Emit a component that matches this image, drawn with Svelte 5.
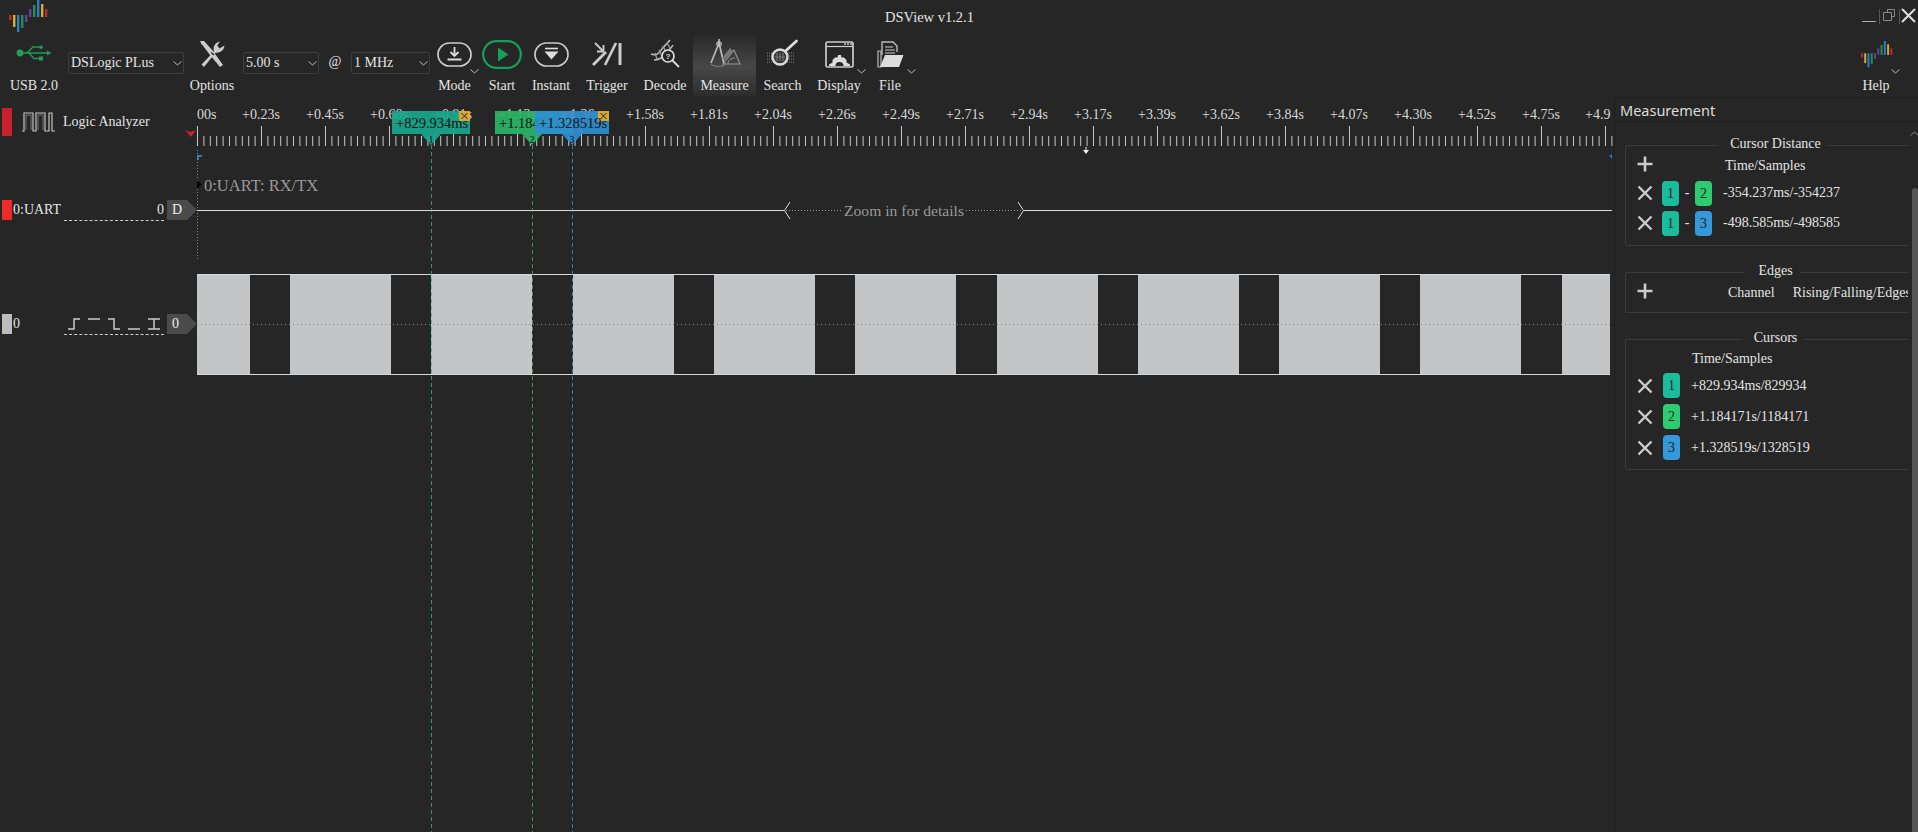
<script>
	const bars = [
		[9, 15, 5, "#b5302c"], [13, 15, 12, "#d8a83a"], [17, 15, 17, "#2a7fc0"], [21, 15, 13, "#23924f"], [25, 15, 7, "#6d3d9c"],
		[29, 9, 8, "#6d3d9c"], [33, 5, 12, "#23924f"], [37, 0, 17, "#2a7fc0"], [41, 4, 13, "#d8a83a"], [45, 9, 8, "#b5302c"]
	];

	const rulerLabels = ["+0.23s", "+0.45s", "+0.68s", "+0.91s", "+1.13s", "+1.36s", "+1.58s", "+1.81s", "+2.04s", "+2.26s", "+2.49s", "+2.71s", "+2.94s", "+3.17s", "+3.39s", "+3.62s", "+3.84s", "+4.07s", "+4.30s", "+4.52s", "+4.75s"];

	const ticks = [];
	for (let i = 0; i <= 221; i++) {
		const x = 197.5 + i * 6.4;
		if (x > 1612) break;
		ticks.push({ x, major: i % 10 === 0 });
	}

	const blocks = [[197, 53]];
	for (let i = 0; i < 10; i++) {
		const x = Math.round(290 + i * 141.3);
		blocks.push([x, Math.min(101, 1610 - x)]);
	}

	const flags = [
		{ n: 1, x: 431, left: 392, w: 78, color: "#1aa88e", line: "#2fb9a0", text: "+829.934ms" },
		{ n: 2, x: 532, left: 495, w: 78, color: "#2bb566", line: "#35c476", text: "+1.184171s" },
		{ n: 3, x: 572, left: 535, w: 74, color: "#2f8fd0", line: "#3a9be0", text: "+1.328519s" }
	];

	const distances = [
		{ a: 1, b: 2, text: "-354.237ms/-354237" },
		{ a: 1, b: 3, text: "-498.585ms/-498585" }
	];

	const cursors = [
		{ n: 1, text: "+829.934ms/829934" },
		{ n: 2, text: "+1.184171s/1184171" },
		{ n: 3, text: "+1.328519s/1328519" }
	];
</script>

{#snippet logo(w, h)}
	<svg width={w} height={h} viewBox="8 0 40 33">
		{#each bars as b}
			<rect x={b[0]} y={b[1]} width="2.4" height={b[2]} fill={b[3]} />
		{/each}
	</svg>
{/snippet}

{#snippet chevron()}
	<svg class="chev" width="9" height="5" viewBox="0 0 9 5"><path d="M.5.5 4.5 4 8.5.5" fill="none" stroke="#bbb" /></svg>
{/snippet}

{#snippet closeIcon()}
	<svg class="x" width="16" height="16" viewBox="0 0 16 16"><path d="M1.5 1.5 14.5 14.5M14.5 1.5 1.5 14.5" stroke="#ccc" stroke-width="2.4" /></svg>
{/snippet}

{#snippet plusIcon()}
	<svg class="x plus" width="16" height="16" viewBox="0 0 16 16"><path d="M8 .5V15.5M.5 8H15.5" stroke="#ccc" stroke-width="2.6" /></svg>
{/snippet}

<div class="app">
	<header class="titlebar">
		<div class="title-logo">{@render logo(40, 33)}</div>
		<span class="title">DSView v1.2.1</span>
		<div class="winctl">
			<svg width="56" height="24" viewBox="0 0 56 24">
				<path d="M1 13.5H15" stroke="#aaa" />
				<path d="M18.5 1V16M38.5 1V16" stroke="#555" />
				<path d="M26.5 1.5H33.5V8.5H30.5V4.5H26.5ZM22.5 4.5H30.5V12.5H22.5Z" fill="none" stroke="#888" />
				<path d="M41 1 54 14M54 1 41 14" stroke="#ddd" stroke-width="2" />
			</svg>
		</div>
	</header>

	<nav class="toolbar">
		<div class="tool usb">
			<div class="icon">
				<svg width="36" height="16" viewBox="0 0 36 16">
					<circle cx="4" cy="8" r="3.4" fill="#1f9d55" />
					<path d="M4 8H32M11 8 17 2H24M13 8 18 13.5H24" fill="none" stroke="#1f9d55" stroke-width="1.3" />
					<circle cx="25" cy="2.3" r="1.8" fill="#1f9d55" />
					<rect x="23" y="11.5" width="4" height="4" fill="#1f9d55" />
					<path d="M31 5.5 35.5 8 31 10.5Z" fill="#1f9d55" />
				</svg>
			</div>
			<span>USB 2.0</span>
		</div>
		<div class="select device">DSLogic PLus {@render chevron()}</div>
		<div class="tool options">
			<div class="icon">
				<svg width="27" height="28" viewBox="0 0 27 28">
					<path d="M2 3 5 1 14 11 24 25 21 27 11 15Z" fill="#ccc" />
					<path d="M1 1 5 1 6 4 3 5Z" fill="#ccc" />
					<path d="M2.5 24.5 15 11.5C14 7 15 3 21 1.5L18.2 5.5 20.5 8.5 25.5 5.5C25 10.5 21 13 16.5 12.8L5 27Z" fill="#ccc" />
					<path d="M12.3 12.5 15 15" stroke="#262626" stroke-width="1.4" />
				</svg>
			</div>
			<span>Options</span>
		</div>
		<div class="select time">5.00 s {@render chevron()}</div>
		<span class="at">@</span>
		<div class="select rate">1 MHz {@render chevron()}</div>

		<div class="tool mode">
			<div class="icon">
				<svg width="35" height="25" viewBox="0 0 35 25">
					<rect x="1" y="1" width="33" height="23" rx="11.5" fill="none" stroke="#ccc" stroke-width="1.7" />
					<path d="M17.5 5V13M13.5 10 17.5 14 21.5 10" fill="none" stroke="#ddd" stroke-width="1.8" />
					<path d="M10.5 17.5H24.5" stroke="#ddd" stroke-width="2" />
				</svg>
			</div>
			<span>Mode</span>
			{@render chevron()}
		</div>
		<div class="tool start">
			<div class="icon">
				<svg width="40" height="29" viewBox="0 0 40 29">
					<rect x="1.2" y="1.2" width="37.6" height="26.6" rx="13.3" fill="none" stroke="#16a057" stroke-width="2.2" />
					<path d="M16 7.5 26.5 14.5 16 21.5Z" fill="#16a057" />
				</svg>
			</div>
			<span>Start</span>
		</div>
		<div class="tool instant">
			<div class="icon">
				<svg width="35" height="25" viewBox="0 0 35 25">
					<rect x="1" y="1" width="33" height="23" rx="11.5" fill="none" stroke="#ccc" stroke-width="1.7" />
					<path d="M11 6.5H24" stroke="#ddd" stroke-width="1.6" />
					<path d="M10.5 9.5H24.5L17.5 17.5Z" fill="#ddd" />
				</svg>
			</div>
			<span>Instant</span>
		</div>
		<div class="tool trigger">
			<div class="icon">
				<svg width="30" height="24" viewBox="0 0 30 24">
					<path d="M1 23 14 10" stroke="#ccc" stroke-width="2.8" />
					<path d="M13 23 24 1" stroke="#ccc" stroke-width="2.6" />
					<path d="M28 1V23" stroke="#ccc" stroke-width="3" />
					<path d="M3 1 11 9M11.5 3V9.5H5" fill="none" stroke="#ccc" stroke-width="1.8" />
				</svg>
			</div>
			<span>Trigger</span>
		</div>
		<div class="tool decode">
			<div class="icon">
				<svg width="30" height="30" viewBox="0 0 30 30">
					<path d="M1 15C7 17 9 14 12 10 14 7 17 5 20 1M4 21C9 21 12 19 15 15 17 12 21 10 23 6" fill="none" stroke="#bbb" stroke-width="1.6" />
					<path d="M5 14 7 20M9 11 12 17M13 7 16 13M17 4 20 9" stroke="#999" stroke-width="1.4" />
					<circle cx="18" cy="17" r="6" fill="#262626" stroke="#ddd" stroke-width="1.7" />
					<path d="M22.5 21.5 29 28" stroke="#ddd" stroke-width="1.8" />
					<text x="18" y="20" class="qmark">?</text>
				</svg>
			</div>
			<span>Decode</span>
		</div>
		<div class="tool measure active">
			<div class="icon">
				<svg width="32" height="30" viewBox="0 0 32 30">
					<path d="M10 1V5M10 5 2 25M10 5 15 26" fill="none" stroke="#bbb" stroke-width="1.7" />
					<circle cx="10" cy="6" r="2.2" fill="none" stroke="#bbb" stroke-width="1.2" />
					<path d="M14 26 25 12 31 26Z" fill="none" stroke="#999" stroke-width="1.1" />
					<path d="M19 26C19 22 22 20 26 20" fill="none" stroke="#999" />
					<path d="M21 10 24 13 16 22 13 20Z" fill="#777" />
					<path d="M2 26C5 29 12 29 16 27" fill="none" stroke="#888" />
				</svg>
			</div>
			<span>Measure</span>
		</div>
		<div class="tool search">
			<div class="icon">
				<svg width="32" height="30" viewBox="0 0 32 30">
					<path d="M0 14H28M0 17H28M0 20H28M0 23H28" stroke="#666" stroke-width="1.6" stroke-dasharray="1 1" />
					<circle cx="13" cy="18" r="7.5" fill="#3a3a3a" stroke="#ddd" stroke-width="2.4" />
					<path d="M10 14V22M13 14V22M16 14V22M8 18H18" stroke="#777" />
					<path d="M18.5 12 29.5 2" stroke="#ddd" stroke-width="2.8" stroke-linecap="round" />
				</svg>
			</div>
			<span>Search</span>
		</div>
		<div class="tool display">
			<div class="icon">
				<svg width="29" height="27" viewBox="0 0 29 27">
					<rect x="1" y="1" width="27" height="25" rx="1.5" fill="none" stroke="#ccc" stroke-width="1.7" />
					<path d="M1 5.5H28" stroke="#ccc" stroke-width="1.2" />
					<path d="M19 3H21M22 3H24M25 3H27" stroke="#ccc" stroke-width="1.5" />
					<path d="M4 25V23.5L7.5 21.5 7.5 19 10 16.5 12.5 16.5 13 14H16L16.5 16.5H19L21.5 19V21.5L25 23.5V25H18.5A4 4 0 0 0 10.5 25Z" fill="#ddd" />
				</svg>
			</div>
			<span>Display</span>
			{@render chevron()}
		</div>
		<div class="tool file">
			<div class="icon">
				<svg width="27" height="27" viewBox="0 0 27 27">
					<path d="M5 14V1H16L20 5V11" fill="none" stroke="#bbb" stroke-width="1.4" />
					<path d="M8 6H16M8 9H18M8 12H18" stroke="#ccc" stroke-width="1.2" />
					<path d="M1 10H4V26H1Z" fill="none" stroke="#bbb" stroke-width="1.2" />
					<path d="M8 14H26.5L22 26H3Z" fill="#ddd" />
				</svg>
			</div>
			<span>File</span>
			{@render chevron()}
		</div>
		<div class="tool help">
			<div class="icon">{@render logo(33, 27)}</div>
			<span>Help</span>
			{@render chevron()}
		</div>
	</nav>

	<main class="body">
		<section class="labels">
			<svg class="ruler-mark" width="11" height="7" viewBox="0 0 11 7"><path d="M0 0 5 2 11 0 6 7Z" fill="#cc2030" /></svg>
			<div class="la-row">
				<i class="swatch la"></i>
				<svg width="33" height="20" viewBox="0 0 33 20">
					<path d="M0 19H2V1H11V19H14V1H23V19H27V1H30V19H33" fill="none" stroke="#c4c4c4" stroke-width="1.2" />
					<path d="M4 18V3H9V18M16 18V3H21V18" fill="none" stroke="#777" />
				</svg>
				<span>Logic Analyzer</span>
			</div>
			<div class="ch-row uart">
				<i class="swatch red"></i>
				<span class="ch-name">0:UART</span>
				<span class="ch-num">0</span>
				<span class="tag">D</span>
			</div>
			<div class="ch-row dso">
				<i class="swatch gray"></i>
				<span class="ch-name">0</span>
				<svg class="trig" width="92" height="12" viewBox="0 0 92 12">
					<path d="M0 11H6V1H12M20 1H32M40 1H46V11H52M60 11H72M80 1H92M86 1V11M80 11H92" fill="none" stroke="#ccc" stroke-width="1.5" />
				</svg>
				<span class="tag">0</span>
			</div>
		</section>

		<svg class="view" width="1417" height="734" viewBox="197 98 1417 734">
			<text x="197" y="119" class="tick-label" text-anchor="start">00s</text>
			{#each rulerLabels as label, i}
				<text x={261 + i * 64} y="119" class="tick-label" text-anchor="middle">{label}</text>
			{/each}
			<text x="1585" y="119" class="tick-label">+4.9</text>
			{#each ticks as t}
				<line x1={t.x} x2={t.x} y1={t.major ? 126 : 136} y2="146" stroke="#c8c8c8" />
			{/each}
			<path d="M1083 150H1089L1086 154Z M1085.5 147H1086.5V151H1085.5Z" fill="#eee" />
			<path d="M197 160V155H203L201 157H199V160Z" fill="#2a7fc0" />
			<path d="M1609 155H1612V159Z" fill="#2a7fc0" />

			<path d="M197.5 150V260" stroke="#888" stroke-dasharray="1 2" />
			<path d="M197 180 201.5 184.5 197 189Z" fill="#000" />
			<text x="204" y="191" class="decoder">0:UART: RX/TX</text>
			<path d="M197 210.5H784M1024 210.5H1612" stroke="#ddd" />
			<path d="M790 202 784.5 210.5 790 219M1018 202 1023.5 210.5 1018 219" fill="none" stroke="#ddd" />
			<path d="M786 210.5H842M966 210.5H1022" stroke="#999" stroke-dasharray="1 2" />
			<text x="904" y="216" class="zoom-hint" text-anchor="middle">Zoom in for details</text>

			{#each blocks as b}
				<rect x={b[0]} y="274" width={b[1]} height="101" fill="#c4c5c7" />
			{/each}
			<path d="M197 274.5H1610M197 374.5H1610" stroke="#d8d8d8" />
			<path d="M197 324.5H1610" stroke="#888" stroke-dasharray="1 3" />

			{#each flags as f}
				<line x1={f.x + 0.5} x2={f.x + 0.5} y1="145" y2="832" stroke={f.line} stroke-dasharray="4 3" opacity="0.75" />
			{/each}
			{#each flags as f}
				<g opacity="0.92">
					<rect x={f.left} y="111" width={f.w} height="23" fill={f.color} />
					<path d="M{f.x - 10} 134H{f.x + 10}L{f.x} 145Z" fill={f.color} />
					<rect x={f.left + f.w - 11} y="111" width="11" height="10" fill="#e8b030" />
					<path d="M{f.left + f.w - 8.5} 113 {f.left + f.w - 2.5} 119M{f.left + f.w - 2.5} 113 {f.left + f.w - 8.5} 119" stroke="#222" />
					<text x={f.left + 4} y="128" class="flag-text">{f.text}</text>
					<text x={f.x} y="143" class="flag-num" text-anchor="middle">{f.n}</text>
				</g>
			{/each}
		</svg>

		<aside class="dock">
			<div class="dock-head">Measurement</div>
			<div class="dock-body">
				<div class="groups">
					<fieldset class="g1">
						<legend>Cursor Distance</legend>
						<div class="row head">
							{@render plusIcon()}
							<span class="time-head">Time/Samples</span>
						</div>
						{#each distances as d}
							<div class="row">
								{@render closeIcon()}
								<b class="badge c{d.a} first">{d.a}</b>
								<span class="dash">-</span>
								<b class="badge c{d.b}">{d.b}</b>
								<span class="val">{d.text}</span>
							</div>
						{/each}
					</fieldset>
					<fieldset class="g2">
						<legend>Edges</legend>
						<div class="row edge">
							{@render plusIcon()}
							<span class="channel">Channel</span>
							<span class="rising">Rising/Falling/Edges</span>
						</div>
					</fieldset>
					<fieldset class="g3">
						<legend>Cursors</legend>
						<div class="cursor-head">Time/Samples</div>
						{#each cursors as c}
							<div class="row cursor">
								{@render closeIcon()}
								<b class="badge c{c.n} first">{c.n}</b>
								<span class="val">{c.text}</span>
							</div>
						{/each}
					</fieldset>
				</div>
				<div class="scroll">
					<svg width="9" height="5" viewBox="0 0 9 5"><path d="M.5 4.5 4.5 1 8.5 4.5" fill="none" stroke="#888" /></svg>
					<div class="thumb"></div>
				</div>
			</div>
		</aside>
	</main>
</div>

<style>
	:global(body) {
		margin: 0;
		background: #262626;
	}
	.app {
		width: 1918px;
		height: 832px;
		background: #262626;
		color: #e4e4e4;
		font-family: "Liberation Serif", serif;
		font-size: 14px;
		display: flex;
		flex-direction: column;
		overflow: hidden;
	}

	.titlebar {
		height: 32px;
		flex: none;
		position: relative;
		display: flex;
		align-items: flex-start;
		justify-content: space-between;
	}
	.title-logo {
		margin-left: 8px;
		line-height: 0;
	}
	.title {
		position: absolute;
		left: 885px;
		top: 8px;
		font-size: 14.5px;
		line-height: 18px;
	}
	.winctl {
		margin-top: 8px;
		margin-right: 1px;
		line-height: 0;
	}

	.toolbar {
		height: 66px;
		flex: none;
		display: flex;
		align-items: flex-start;
	}
	.tool {
		position: relative;
		height: 64px;
		display: flex;
		flex-direction: column;
		align-items: center;
		flex: none;
	}
	.tool .icon {
		height: 44px;
		display: flex;
		align-items: center;
		justify-content: center;
	}
	.tool span {
		line-height: 20px;
		white-space: nowrap;
	}
	.tool .chev {
		position: absolute;
		top: 37px;
		right: -1px;
	}
	.usb { width: 68px; }
	.usb .icon { padding-bottom: 2px; box-sizing: border-box; }
	.options { width: 56px; }
	.mode { width: 49px; }
	.start { width: 46px; }
	.instant { width: 52px; }
	.trigger { width: 60px; }
	.decode { width: 56px; }
	.measure { width: 63px; }
	.search { width: 53px; }
	.display { width: 60px; }
	.file { width: 42px; margin-right: 8px; }
	.help { width: 40px; margin-left: auto; margin-right: 22px; }
	.mode .chev { right: 0; }
	.display .chev { right: 3px; }
	.file .chev { right: -5px; }
	.help .chev { right: -4px; }
	.measure.active {
		background: linear-gradient(#262626, #474747 55%, #2c2c2c);
	}
	.measure span {
		margin-top: 3px;
	}
	.qmark {
		font-size: 8px;
		font-weight: 700;
		fill: #ddd;
		text-anchor: middle;
		font-family: "Liberation Sans", sans-serif;
	}

	.select {
		position: relative;
		height: 22px;
		margin-top: 20px;
		box-sizing: border-box;
		border: 1px solid #3d3d3d;
		border-radius: 2px;
		padding-left: 2px;
		line-height: 20px;
		font-size: 14px;
		flex: none;
	}
	.select .chev {
		position: absolute;
		right: 1px;
		top: 8px;
	}
	.device { width: 116px; }
	.time { width: 76px; margin-left: 3px; }
	.rate { width: 79px; }
	.at {
		width: 32px;
		flex: none;
		text-align: center;
		margin-top: 22px;
	}

	.body {
		flex: 1;
		display: flex;
		min-height: 0;
	}
	.labels {
		position: relative;
		width: 197px;
		flex: none;
	}
	.ruler-mark {
		position: absolute;
		left: 185px;
		top: 32px;
	}
	.la-row {
		height: 29px;
		margin-top: 9px;
		display: flex;
		align-items: center;
	}
	.la-row svg {
		margin-left: 10px;
		margin-right: 8px;
	}
	.swatch {
		display: block;
		width: 10px;
		margin-left: 2px;
		flex: none;
	}
	.swatch.la {
		height: 28px;
		background: #c8202e;
	}
	.swatch.red {
		height: 20px;
		background: #ee2a2a;
	}
	.swatch.gray {
		height: 20px;
		background: #bcbcbc;
	}
	.ch-row {
		position: relative;
		height: 20px;
		display: flex;
		align-items: center;
	}
	.ch-row.uart { margin-top: 64px; }
	.ch-row.dso { margin-top: 94px; }
	.ch-row::after {
		content: "";
		position: absolute;
		left: 64px;
		width: 100px;
		top: 20px;
		border-top: 1px dashed #ccc;
	}
	.ch-name {
		margin-left: 1px;
		font-size: 14px;
	}
	.ch-num {
		position: absolute;
		left: 157px;
	}
	.trig {
		position: absolute;
		left: 68px;
		top: 4px;
	}
	.tag {
		position: absolute;
		left: 167px;
		width: 30px;
		height: 20px;
		box-sizing: border-box;
		padding-left: 5px;
		line-height: 20px;
		background: #4b4b4b;
		clip-path: polygon(0 0, 20px 0, 30px 50%, 20px 100%, 0 100%);
		color: #eee;
	}

	.view {
		display: block;
		flex: none;
		width: 1417px;
		height: 734px;
	}
	.tick-label {
		font-size: 14px;
		fill: #d8d8d8;
	}
	.decoder {
		font-size: 16.5px;
		fill: #9a9a9a;
	}
	.zoom-hint {
		font-size: 15.6px;
		fill: #9a9a9a;
	}
	.flag-text {
		font-size: 14.5px;
		fill: #111;
	}
	.flag-num {
		font-size: 10px;
		fill: #111;
	}

	.dock {
		width: 304px;
		flex: none;
		border-left: 1px solid #1e1e1e;
		margin-top: -1px;
		display: flex;
		flex-direction: column;
		box-sizing: border-box;
	}
	.dock-head {
		height: 25px;
		box-sizing: border-box;
		border-top: 1px solid #1e1e1e;
		border-bottom: 1px solid #1e1e1e;
		padding-left: 5px;
		line-height: 25px;
		font-family: "Noto Sans", sans-serif;
		font-size: 14.5px;
		color: #ddd;
	}
	.dock-body {
		flex: 1;
		display: flex;
		padding-top: 15px;
		min-height: 0;
	}
	.groups {
		width: 283px;
		margin-left: 10px;
		flex: none;
		display: flex;
		flex-direction: column;
		gap: 18px;
	}
	fieldset {
		margin: 0;
		padding: 0 0 0 11px;
		min-width: 0;
		box-sizing: border-box;
		border: 1px solid #3c3c3c;
		border-right: none;
		border-radius: 2px 0 0 2px;
		overflow: hidden;
		flex: none;
	}
	legend {
		margin: 0 auto;
		padding: 0 7px 0 13px;
		line-height: 13px;
		height: 16px;
		font-size: 14px;
	}
	.g1 { height: 109px; }
	.g2 { height: 49px; }
	.g3 { height: 139px; }
	.row {
		display: flex;
		align-items: center;
		height: 30px;
		white-space: nowrap;
	}
	.row.head { height: 25px; }
	.row.head .plus { margin-top: -3px; }
	.row.edge { height: 22px; }
	.row.edge span { margin-top: 3px; }
	.row.cursor { height: 31px; }
	.x { flex: none; }
	.time-head { margin-left: 72px; }
	.channel { margin-left: 75px; }
	.rising { margin-left: 18px; }
	.cursor-head {
		height: 23px;
		line-height: 24px;
		padding-left: 55px;
	}
	.badge {
		display: block;
		width: 17px;
		height: 25px;
		line-height: 25px;
		border-radius: 4px;
		text-align: center;
		font-weight: 400;
		color: #222;
		flex: none;
	}
	.badge.first { margin-left: 9px; }
	.cursor .badge.first { margin-left: 10px; }
	.c1 { background: #1abc9c; }
	.c2 { background: #2ecc71; }
	.c3 { background: #3498db; }
	.dash {
		width: 16px;
		text-align: center;
	}
	.val { margin-left: 11px; }
	.scroll {
		margin-left: 3px;
		width: 7px;
		display: flex;
		flex-direction: column;
		align-items: center;
		margin-top: -6px;
	}
	.scroll svg {
		margin-bottom: 52px;
		flex: none;
	}
	.thumb {
		width: 6px;
		flex: 1;
		background: #555;
		border-radius: 3px 3px 0 0;
	}
</style>
